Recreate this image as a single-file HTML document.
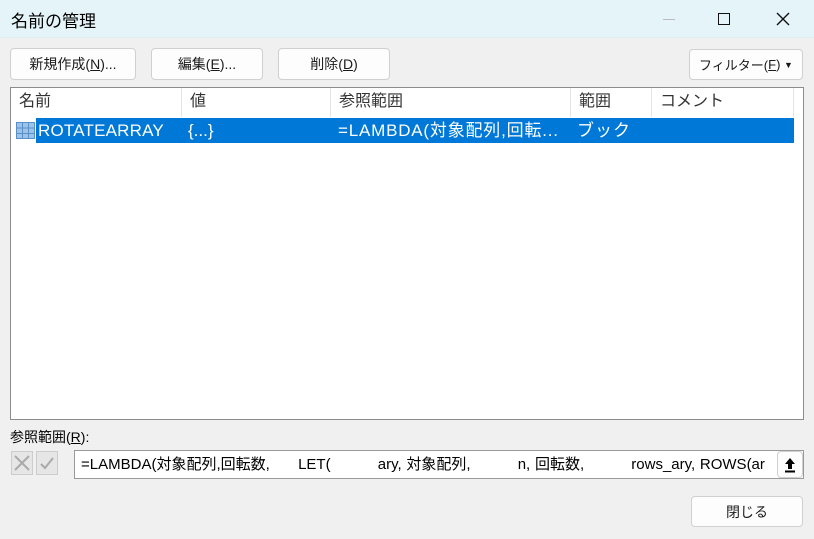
<!DOCTYPE html>
<html><head><meta charset="utf-8"><style>
*{box-sizing:border-box;margin:0;padding:0}
body{width:814px;height:539px;overflow:hidden;background:#f0f0f0;font-family:"Liberation Sans","Noto Sans CJK JP",sans-serif;position:relative;font-size:14px;color:#000}
.abs{position:absolute}
.title{left:0;top:0;width:814px;height:38px;background:#e5f4f8;border-bottom:1px solid #e0eef2}
.btn{position:absolute;background:#fdfdfd;border:1px solid #d0d0d0;border-radius:4px;display:flex;align-items:center;justify-content:center;font-size:14px;color:#1a1a1a}
u{text-decoration:underline}
.list{left:10px;top:87px;width:794px;height:333px;background:#fff;border:1px solid #8c8c8c}
.hdr{position:absolute;top:0;height:29px;line-height:28px;font-size:16px;color:#333;padding-left:8px;border-right:1px solid #e4e4e4}
.sel{left:36px;top:118px;width:758px;height:25px;background:#0078d7;color:#fff;font-size:17px;line-height:25px}
.sel span{position:absolute;top:0}
</style></head><body>
<div class="abs title"></div>
<div class="abs" style="left:11px;top:7px;font-size:17px">名前の管理</div>
<div class="abs" style="left:663px;top:19px;width:12px;height:1px;background:#bbb"></div>
<div class="abs" style="left:718px;top:13px;width:12px;height:12px;border:1.5px solid #111"></div>
<svg class="abs" style="left:776px;top:12px" width="14" height="14"><path d="M1 1L13 13M13 1L1 13" stroke="#111" stroke-width="1.4"/></svg>
<div class="btn" style="left:10px;top:48px;width:126px;height:32px">新規作成(<u>N</u>)...</div>
<div class="btn" style="left:151px;top:48px;width:112px;height:32px">編集(<u>E</u>)...</div>
<div class="btn" style="left:278px;top:48px;width:112px;height:32px">削除(<u>D</u>)</div>
<div class="btn" style="left:689px;top:49px;width:114px;height:31px;font-size:13px">フィルター(<u>F</u>)&nbsp;<span style="font-size:9px">▼</span></div>
<div class="abs list">
<div class="hdr" style="left:0;width:171px">名前</div>
<div class="hdr" style="left:171px;width:149px">値</div>
<div class="hdr" style="left:320px;width:240px">参照範囲</div>
<div class="hdr" style="left:560px;width:81px">範囲</div>
<div class="hdr" style="left:641px;width:142px">コメント</div>
</div>
<svg class="abs" style="left:16px;top:122px" width="19" height="17"><rect x="0.5" y="0.5" width="18" height="16" fill="#9cc3e8" stroke="#5a8fc8"/><path d="M6.5 0V17M12.5 0V17M0 6H19M0 11.5H19" stroke="#5a8fc8"/></svg>
<div class="abs sel"><span style="left:2px;letter-spacing:0.2px">ROTATEARRAY</span><span style="left:152px">{...}</span><span style="left:302px;letter-spacing:0.8px">=LAMBDA(対象配列,回転...</span><span style="left:541px;letter-spacing:1px">ブック</span></div>
<div class="abs" style="left:10px;top:427px;font-size:14px">参照範囲(<u>R</u>):</div>
<div class="abs" style="left:11px;top:451px;width:22px;height:24px;background:#e6e6e6;border:1px solid #ccc"></div>
<svg class="abs" style="left:13px;top:454px" width="18" height="18"><path d="M2 2L16 16M16 2L2 16" stroke="#aaa" stroke-width="2"/></svg>
<div class="abs" style="left:36px;top:451px;width:22px;height:24px;background:#e6e6e6;border:1px solid #ccc"></div>
<svg class="abs" style="left:38px;top:454px" width="18" height="18"><path d="M3 10L7 14L15 4" stroke="#aaa" stroke-width="2" fill="none"/></svg>
<div class="abs" style="left:74px;top:450px;width:730px;height:29px;background:#fff;border:1px solid #999;overflow:hidden;white-space:pre;font-size:15px;line-height:27px;padding-left:6px;word-spacing:0.55px">=LAMBDA(対象配列,回転数,      LET(          ary, 対象配列,          n, 回転数,          rows_ary, ROWS(ar</div>
<div class="btn" style="left:777px;top:451px;width:26px;height:27px"><svg width="12" height="16"><path d="M6 1L1 7H4V12H8V7H11Z" fill="#000"/><rect x="1" y="13.5" width="10" height="2" fill="#000"/></svg></div>
<div class="btn" style="left:691px;top:496px;width:112px;height:31px">閉じる</div>
</body></html>
